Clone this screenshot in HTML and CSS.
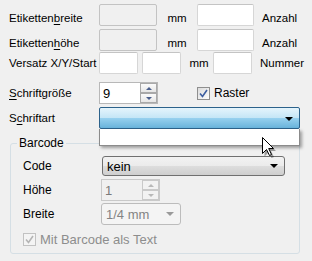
FILE: index.html
```html
<!DOCTYPE html>
<html lang="de">
<head>
  <meta charset="UTF-8" />
  <title>Etikett</title>
  <link rel="stylesheet" href="styles.css">
</head>
<body>
<div class="dialog">
  <div class="row r1">
    <span class="lbl low">Etiketten<u>b</u>reite</span>
    <div class="box dis w58"></div>
    <span class="unit low">mm</span>
    <div class="box w57"></div>
    <span class="tail low">Anzahl</span>
  </div>
  <div class="row r2">
    <span class="lbl low">Etiketten<u>h</u>öhe</span>
    <div class="box dis w58"></div>
    <span class="unit low">mm</span>
    <div class="box w57"></div>
    <span class="tail low">Anzahl</span>
  </div>
  <div class="row r3">
    <span class="lbl">Versatz X/Y/Start</span>
    <div class="box w39"></div>
    <div class="box w39 gap4"></div>
    <span class="unit small">mm</span>
    <div class="box w39"></div>
    <span class="tail">Nummer</span>
  </div>
  <div class="row r4">
    <span class="lbl"><u>S</u>chriftgröße</span>
    <div class="spin">
      <span class="val">9</span>
      <div class="btns">
        <span class="sb up"></span>
        <span class="sb down"></span>
      </div>
    </div>
    <label class="check">
      <span class="cb on">
        <svg width="9" height="9" viewBox="0 0 9 9"><path d="M1 4.5 L3.5 7.5 L8 1" fill="none" stroke="#3d5ea0" stroke-width="1.6"/></svg>
      </span>
      Raster
    </label>
  </div>
  <div class="row r5">
    <span class="lbl">S<u>c</u>hriftart</span>
    <div class="combo open">
      <span class="arrow"></span>
      <div class="popup"></div>
    </div>
  </div>

  <fieldset class="group">
    <legend>Barcode</legend>
    <div class="grow g1">
      <span class="glbl">Code</span>
      <div class="combo btn">
        <span class="ctext">kein</span>
        <span class="arrow"></span>
      </div>
    </div>
    <div class="grow g2">
      <span class="glbl">Höhe</span>
      <div class="spin dis">
        <span class="val">1</span>
        <div class="btns">
          <span class="sb up"></span>
          <span class="sb down"></span>
        </div>
      </div>
    </div>
    <div class="grow g3">
      <span class="glbl">Breite</span>
      <div class="combo dcombo">
        <span class="ctext">1/4 mm</span>
        <span class="arrow"></span>
      </div>
    </div>
    <label class="check dcheck">
      <span class="cb">
        <svg width="9" height="9" viewBox="0 0 9 9"><path d="M1 4.5 L3.5 7.5 L8 1" fill="none" stroke="#b4b4b4" stroke-width="1.6"/></svg>
      </span>
      Mit Barcode als Text
    </label>
  </fieldset>

  <svg class="cursor" width="14" height="21" viewBox="0 0 14 21">
    <path d="M2.5 2.5 L2.5 19.5 L6.5 15.5 L9.5 21 L12 20 L9 14 L14 14 Z" fill="rgba(0,0,0,0.35)"/>
    <path d="M0.5 0.5 L0.5 16.5 L4.5 12.5 L7.5 18.5 L9.5 17.5 L6.7 11.5 L11.5 11.5 Z" fill="#fff" stroke="#000" stroke-width="1"/>
  </svg>
</div>
</body>
</html>
```

FILE: styles.css
```css
html, body {
  margin: 0;
  background: #f0f0f0;
}
body {
  font-family: 'Liberation Sans', Arial, sans-serif;
  font-size: 11.5px;
  color: #000;
}
.dialog {
  position: relative;
  width: 312px;
  height: 261px;
  padding-left: 9px;
  padding-top: 4px;
  box-sizing: border-box;
  overflow: hidden;
}
u {
  text-decoration-thickness: 1px;
  text-underline-offset: 2px;
}
.row {
  display: flex;
  align-items: center;
  height: 22px;
}
.r2 { margin-top: 3px; }
.r3 { margin-top: 1px; }
.r4 { margin-top: 8px; }
.r5 { margin-top: 3px; }
.lbl {
  width: 90px;
  white-space: nowrap;
}
.low { padding-top: 5px; }
.box {
  height: 22px;
  box-sizing: border-box;
  background: #fff;
  border: 1px solid #d6d6d6;
  border-top-color: #c4c4c4;
  border-radius: 2px;
}
.box.dis {
  background: #f0f0f0;
  border-color: #c3c3c3;
}
.w58 { width: 58px; }
.w57 { width: 57px; }
.w39 { width: 39px; }
.gap4 { margin-left: 4px; }
.unit {
  width: 40px;
  text-align: center;
}
.unit.small {
  width: 32px;
  padding-left: 4px;
  box-sizing: border-box;
}
.tail {
  margin-left: 8px;
}
.spin {
  width: 59px;
  height: 22px;
  box-sizing: border-box;
  background: #fff;
  border: 1px solid #b8b8b8;
  display: flex;
  align-items: center;
  justify-content: space-between;
  padding-left: 3px;
}
.spin .val {
  font-size: 13px;
}
.btns {
  display: flex;
  flex-direction: column;
  height: 20px;
  width: 17px;
}
.sb {
  flex: 1;
  border: 1px solid #a9a9a9;
  background: linear-gradient(#fbfbfb, #e6e6e6);
  display: flex;
  align-items: center;
  justify-content: center;
}
.sb::after {
  content: "";
  border-left: 3.5px solid transparent;
  border-right: 3.5px solid transparent;
}
.sb.up::after { border-bottom: 3.5px solid #4b5f8c; }
.sb.down::after { border-top: 3.5px solid #4b5f8c; }
.spin.dis {
  background: #f0f0f0;
  border-color: #c9c9c9;
  color: #7a7a7a;
  margin-left: -1px;
}
.spin.dis .sb {
  border-color: #c9c9c9;
  background: #f2f2f2;
}
.spin.dis .sb.up::after { border-bottom-color: #b8b8b8; }
.spin.dis .sb.down::after { border-top-color: #b8b8b8; }
.check {
  display: flex;
  align-items: center;
  gap: 4px;
  margin-left: 39px;
  font-size: 12px;
}
.cb {
  width: 13px;
  height: 13px;
  box-sizing: border-box;
  border: 1px solid #8f8f8f;
  background: linear-gradient(135deg, #dcdcdc, #fdfdfd);
  display: flex;
  align-items: center;
  justify-content: center;
}
.combo {
  position: relative;
  height: 22px;
  box-sizing: border-box;
  display: flex;
  align-items: center;
}
.combo.open {
  width: 201px;
  border: 1px solid #2c628b;
  border-radius: 2px;
  background: linear-gradient(#e5f4fc, #c4e5f6 50%, #98d1ef 50%, #68b3db);
}
.arrow {
  position: absolute;
  right: 6px;
  top: 9px;
  border-left: 4px solid transparent;
  border-right: 4px solid transparent;
  border-top: 4px solid #000;
}
.popup {
  position: absolute;
  left: -1px;
  top: 21px;
  width: 201px;
  height: 17px;
  box-sizing: border-box;
  background: #fff;
  border: 1px solid #8b8b8b;
  border-top: none;
  box-shadow: 2px 2px 3px rgba(0,0,0,0.35);
  z-index: 2;
}
.group {
  margin: 7px 0 0 1px;
  width: 290px;
  height: 118px;
  box-sizing: border-box;
  border: 1px solid #d5dfe5;
  border-radius: 3px;
  padding: 6px 0 0 12px;
  font-size: 12px;
}
.group legend {
  margin-left: -6px;
  padding: 0 2px;
}
.grow {
  display: flex;
  align-items: center;
}
.glbl {
  width: 79px;
}
.g1 { height: 20px; }
.g2 { height: 22px; margin-top: 3px; }
.g3 { height: 22px; margin-top: 2px; }
.combo.btn {
  width: 183px;
  height: 20px;
  border: 1px solid #707070;
  border-radius: 3px;
  background: linear-gradient(#f2f2f2, #ebebeb 50%, #dddddd 50%, #cfcfcf);
}
.ctext {
  padding-left: 4px;
  font-size: 13px;
}
.combo.btn .arrow { top: 7px; }
.combo.dcombo {
  width: 80px;
  margin-left: -1px;
  border: 1px solid #bcbcbc;
  border-radius: 3px;
  background: #f4f4f4;
  color: #838383;
}
.dcombo .arrow {
  border-top-color: #9a9a9a;
  top: 8px;
}
.dcheck {
  margin-left: 0;
  margin-top: 7px;
  color: #8d8d8d;
  font-size: 13px;
}
.dcheck .cb {
  border-color: #c2c2c2;
  background: #f4f4f4;
}
.cursor {
  position: absolute;
  left: 262px;
  top: 137px;
  z-index: 3;
}
```
